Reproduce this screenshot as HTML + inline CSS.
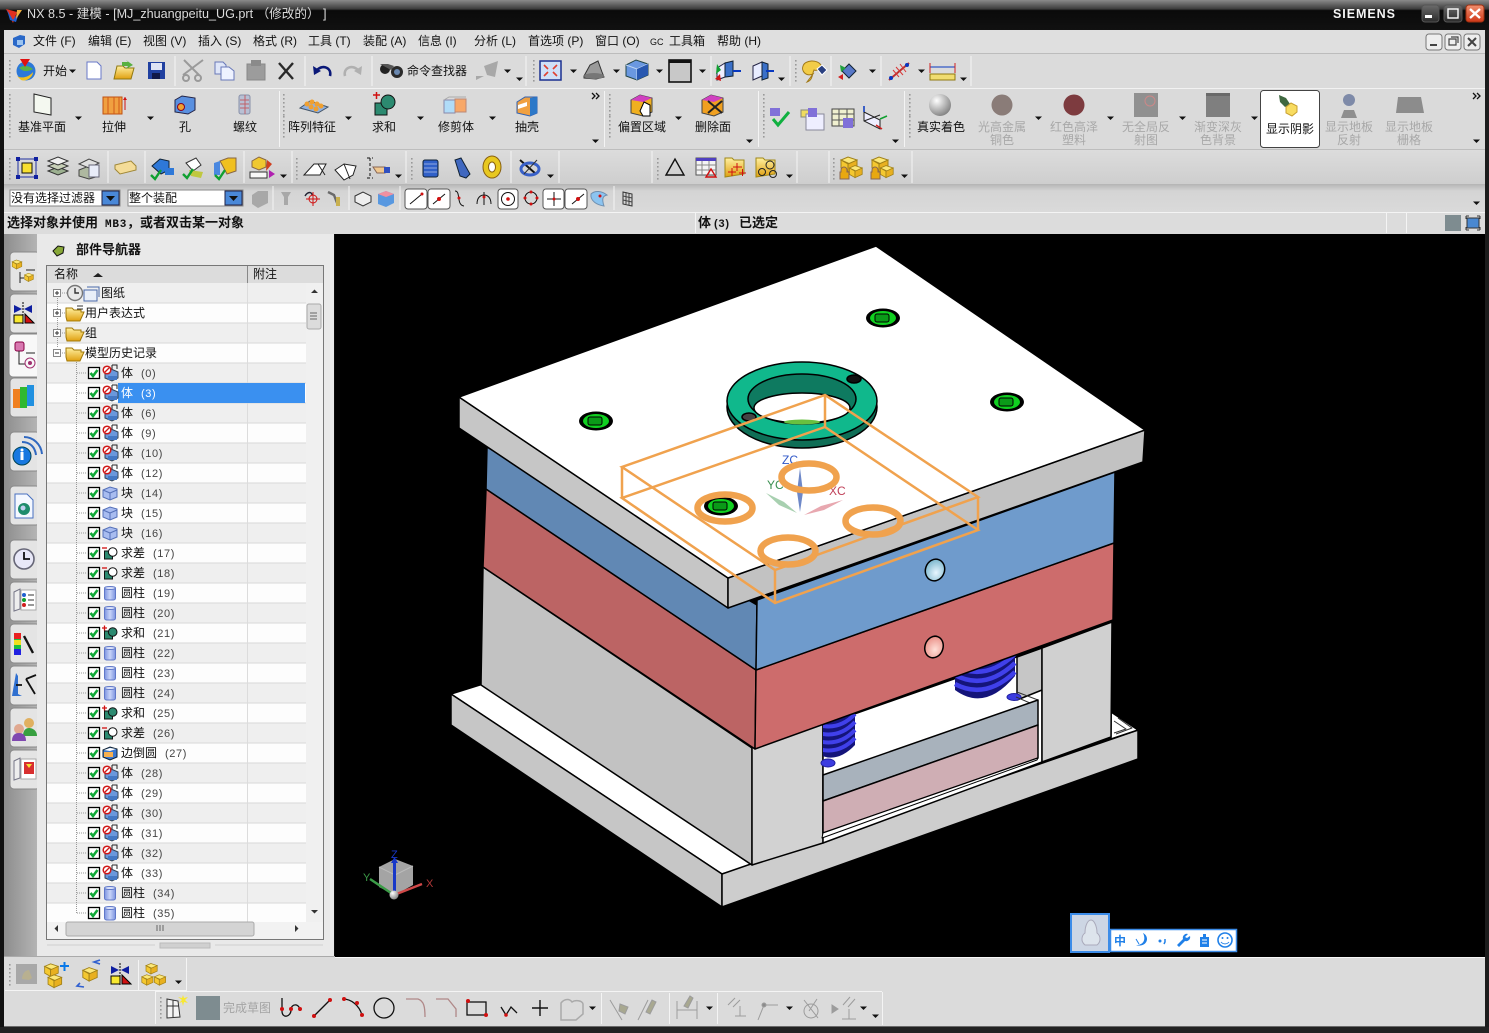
<!DOCTYPE html>
<html><head><meta charset="utf-8"><title>NX 8.5</title>
<style>
html,body{margin:0;padding:0;background:#000;width:1489px;height:1033px;overflow:hidden}
svg{display:block}
text{font-family:"Liberation Sans","WenQuanYi Zen Hei","Noto Sans CJK SC",sans-serif;font-size:12px;fill:#111}
.m text{text-anchor:middle}
.g text{fill:#a8a8a8}
.n{font-size:11px;fill:#444;letter-spacing:.6px}
.b{font-weight:700;font-size:13px}
</style></head><body>
<svg xmlns="http://www.w3.org/2000/svg" width="1489" height="1033" viewBox="0 0 1489 1033">
<defs>
<linearGradient id="tb" x1="0" y1="0" x2="0" y2="1"><stop offset="0" stop-color="#8a8a8a"/><stop offset=".3" stop-color="#3c3c3c"/><stop offset=".35" stop-color="#0a0a0a"/><stop offset="1" stop-color="#111"/></linearGradient>
<linearGradient id="side" x1="0" y1="0" x2="1" y2="0"><stop offset="0" stop-color="#8d8d8d"/><stop offset="1" stop-color="#b4b4b4"/></linearGradient>
<linearGradient id="bar3" x1="0" y1="0" x2="0" y2="1"><stop offset="0" stop-color="#dcdcdc"/><stop offset="1" stop-color="#cecece"/></linearGradient>
<linearGradient id="bar4" x1="0" y1="0" x2="0" y2="1"><stop offset="0" stop-color="#b4b4b4"/><stop offset=".25" stop-color="#d4d4d4"/><stop offset="1" stop-color="#dadada"/></linearGradient>
<linearGradient id="btn" x1="0" y1="0" x2="0" y2="1"><stop offset="0" stop-color="#6c6c6c"/><stop offset="1" stop-color="#2a2a2a"/></linearGradient>
<linearGradient id="red" x1="0" y1="0" x2="0" y2="1"><stop offset="0" stop-color="#f09070"/><stop offset="1" stop-color="#d03818"/></linearGradient>
<linearGradient id="folder" x1="0" y1="0" x2="0" y2="1"><stop offset="0" stop-color="#fff0a0"/><stop offset="1" stop-color="#e0a010"/></linearGradient>
<linearGradient id="cyl" x1="0" y1="0" x2="1" y2="0"><stop offset="0" stop-color="#7c94e0"/><stop offset=".5" stop-color="#c8d4f8"/><stop offset="1" stop-color="#7c94e0"/></linearGradient>
<radialGradient id="ball" cx=".35" cy=".3" r=".8"><stop offset="0" stop-color="#fff"/><stop offset="1" stop-color="#777"/></radialGradient>
<radialGradient id="hb" cx=".6" cy=".6" r=".7"><stop offset="0" stop-color="#e8f6ff"/><stop offset="1" stop-color="#70b0c8"/></radialGradient>
<radialGradient id="hr" cx=".6" cy=".6" r=".7"><stop offset="0" stop-color="#ffe0d8"/><stop offset="1" stop-color="#e88880"/></radialGradient>
<path id="tk" d="M-3.500-1.500h7L0 2z" fill="#111"/>
<g id="grip" fill="#999"><rect y="0" width="1.600" height="1.600"/><rect y="4" width="1.600" height="1.600"/><rect y="8" width="1.600" height="1.600"/><rect y="12" width="1.600" height="1.600"/><rect y="16" width="1.600" height="1.600"/><rect y="20" width="1.600" height="1.600"/></g>
<g id="chk"><rect x="88.500" y="-5.500" width="11" height="11" fill="#fff" stroke="#000" stroke-width="1.300"/><path d="M90.500 0l2.500 3 4.500-6" fill="none" stroke="#10a838" stroke-width="2.600"/></g>
<g id="ibody"><path d="M105 0l6-4 7 3v6l-6 3-7-3z" fill="#6a98dc" stroke="#345"/><path d="M108 3h9v4h-9z" fill="#4478c4"/><path d="M112-8h5v4M112-8v4" fill="none" stroke="#222"/><circle cx="107" cy="-3" r="3.800" fill="#fff" stroke="#d01818" stroke-width="1.500"/><path d="M105-1l4-4" stroke="#d01818" stroke-width="1.300"/></g>
<g id="iblock"><path d="M103-3l7-3 7 2v8l-7 3-7-3z" fill="#a8bcf0" stroke="#5570b8"/><path d="M103-3l7 3v7M110 0l7-3" fill="none" stroke="#5570b8"/></g>
<g id="icyl"><rect x="104.500" y="-6" width="11" height="13" rx="2" fill="url(#cyl)" stroke="#6078c8"/><ellipse cx="110" cy="-5" rx="5.500" ry="1.500" fill="#d8e0fa" stroke="#6078c8"/></g>
<g id="idiff"><rect x="104.500" y="-2" width="8" height="8" fill="#2c8a70" stroke="#111"/><circle cx="112.700" cy="-1" r="4.300" fill="#fff" stroke="#111"/><path d="M102-5h5" stroke="#d01010" stroke-width="1.300"/></g>
<g id="iunion"><rect x="104.500" y="-2" width="8" height="8" fill="#2c8a70" stroke="#111"/><circle cx="112.700" cy="-1" r="4.300" fill="#2c8a70" stroke="#111"/><path d="M102-5h5M104.500-7.500v5" stroke="#d01010" stroke-width="1.300"/></g>
<g id="iblend"><path d="M103-3l7-3 7 2v8l-7 3-7-3z" fill="#3c78d0" stroke="#123"/><path d="M104-1h9v5h-9z" fill="#f8b050"/><path d="M104-3l6-2 6 1-6 2z" fill="#fff"/></g>
<path id="bf" d="M0 3V-6h6l2 2h7v2h3l-4 9H1z" fill="url(#folder)" stroke="#a07808"/>
<g id="cb"><path d="M-8-2l7-3 9 3-7 4z" fill="#fce878" stroke="#a08018"/><path d="M-8-2v8l7 4V2z" fill="#f4c830" stroke="#a08018"/><path d="M-1 2v8l9-4V-2z" fill="#e8b020" stroke="#a08018"/></g>
<g id="mirr"><path d="M-9-8L-1-4-9 0zM1-4L9-8V0z" fill="#0e1ea0"/><path d="M0-11V11" stroke="#000" stroke-dasharray="2 1"/><rect x="-9" y="2" width="9" height="8" fill="#f8e830" stroke="#000"/><path d="M2 10V1l9 9z" fill="#d01010" stroke="#000"/></g>
<clipPath id="cav"><polygon points="823,720 1042,640 1042,762 823,843"/></clipPath>
</defs>

<rect width="1489" height="1033" fill="#0d0d0d"/>
<rect width="1489" height="30" fill="url(#tb)"/>
<path d="M6 9l11 3-4 11z" fill="#e03020"/><path d="M7 10l6 10 7-10-4 12-6-2z" fill="#2060d0"/><path d="M17 10l5 0-6 9z" fill="#f0b040"/>
<text x="27" y="18" style="fill:#dcdcdc;font-size:12.600px">NX 8.5 - 建模 - [MJ_zhuangpeitu_UG.prt （修改的） ]</text>
<text x="1333" y="18" textLength="62" lengthAdjust="spacing" style="fill:#f4f4f4;font-weight:700;font-size:12.500px">SIEMENS</text>
<rect x="1422" y="5" width="17" height="17" rx="3" fill="url(#btn)" stroke="#555"/><rect x="1425" y="15" width="7" height="3" fill="#fff"/>
<rect x="1444" y="5" width="18" height="17" rx="3" fill="url(#btn)" stroke="#555"/><rect x="1448" y="9" width="10" height="9" fill="none" stroke="#fff" stroke-width="1.400"/>
<rect x="1466" y="5" width="18" height="17" rx="3" fill="url(#red)" stroke="#a03010"/><path d="M1470 9l10 9m0-9l-10 9" stroke="#fff" stroke-width="2.400"/>

<rect x="4" y="30" width="1481" height="204" fill="#dadada"/>
<rect x="4" y="30" width="1481" height="24" fill="#dfdfdf"/>
<rect x="4" y="53" width="1481" height="1" fill="#bcbcbc"/>
<rect x="4" y="54" width="1481" height="34" fill="#dbdbdb"/>
<rect x="4" y="88" width="1481" height="1" fill="#f2f2f2"/>
<rect x="4" y="89" width="1481" height="60" fill="#dadada"/>
<rect x="4" y="149" width="1481" height="1" fill="#bdbdbd"/>
<rect x="4" y="150" width="1481" height="34" fill="url(#bar3)"/>
<rect x="4" y="184" width="1481" height="28" fill="url(#bar4)"/>
<rect x="4" y="212" width="1481" height="1" fill="#f4f4f4"/>
<rect x="4" y="213" width="1481" height="21" fill="#dcdcdc"/>
<path d="M695.500 213v20M1386.500 213v20M1406.500 213v20" stroke="#f4f4f4"/>

<path d="M13 38l7-3 5 1v8l-6 4-6-3z" fill="#2a68c8"/><path d="M17 40h6v5h-6z" fill="#9cc4f0"/>
<text y="45"><tspan x="33">文件 (F)</tspan><tspan x="88">编辑 (E)</tspan><tspan x="143">视图 (V)</tspan><tspan x="198">插入 (S)</tspan><tspan x="253">格式 (R)</tspan><tspan x="308">工具 (T)</tspan><tspan x="363">装配 (A)</tspan><tspan x="418">信息 (I)</tspan><tspan x="474">分析 (L)</tspan><tspan x="528">首选项 (P)</tspan><tspan x="595">窗口 (O)</tspan><tspan x="650" style="font-size:9px">GC</tspan><tspan x="669">工具箱</tspan><tspan x="717">帮助 (H)</tspan></text>
<g fill="#eee" stroke="#777"><rect x="1426" y="34" width="16" height="16" rx="3"/><rect x="1445" y="34" width="16" height="16" rx="3"/><rect x="1464" y="34" width="16" height="16" rx="3"/></g>
<path d="M1430 45h7" stroke="#444" stroke-width="2"/><path d="M1449 39h7v6h-7zM1451 37h7v6" fill="none" stroke="#444" stroke-width="1.200"/><path d="M1468 38l8 8m0-8l-8 8" stroke="#444" stroke-width="2"/>

<g stroke="#f4f4f4"><path d="M175 56v30M305 56v30M372 56v30M526 56v30M711 56v30M790 56v30M831 56v30M881 56v30M971 56v30"/></g>
<use href="#grip" x="9" y="60"/><use href="#grip" x="533" y="60"/><use href="#grip" x="795" y="60"/>
<circle cx="26" cy="71" r="9.500" fill="#2c78d8"/><path d="M19 68c4-3 9-3 14 1-3 2-8 3-11 1z" fill="#58b048"/><path d="M17 76c5 3 12 1 16-4 0 5-6 10-12 8z" fill="#f0c020"/><path d="M20 59h10l-5 8z" fill="#e01010"/>
<text x="43" y="75">开始</text><use href="#tk" x="72.500" y="71"/>
<path d="M87 62h10l4 4v13H87z" fill="#fff" stroke="#6878c8"/>
<path d="M114 79l3-13h6l2 2h9l-3 11z" fill="url(#folder)" stroke="#907810"/><path d="M122 62h6l-2-2 7 5-7 4 2-3h-6z" fill="#58b040"/>
<rect x="148" y="62" width="17" height="17" fill="#2040a0"/><rect x="151" y="63" width="11" height="7" fill="#dfe4f4"/><rect x="152" y="73" width="8" height="6" fill="#101848"/>
<g stroke="#9a9a9a" fill="none" stroke-width="2"><path d="M184 60l15 15M203 60l-20 15"/><circle cx="186" cy="78" r="3"/><circle cx="198" cy="78" r="3"/></g>
<path d="M215 62h8l3 3v9h-11z" fill="#dfe6f8" stroke="#6878b8"/><path d="M221 67h8l5 4v9h-13z" fill="#eef2ff" stroke="#6878b8"/>
<rect x="247" y="64" width="18" height="16" fill="#9c9c9c" stroke="#888"/><rect x="251" y="60" width="10" height="6" fill="#8a8a8a"/>
<path d="M279 63l14 16m0-16l-14 16" stroke="#2a2a2a" stroke-width="2.400"/>
<path d="M330 76c2-8-7-12-13-6" fill="none" stroke="#0a1878" stroke-width="2.600"/><path d="M313 66l1 9 7-4z" fill="#0a1878"/>
<path d="M345 76c-2-8 7-12 13-6" fill="none" stroke="#b0b0b0" stroke-width="2.600"/><path d="M362 66l-1 9-7-4z" fill="#b0b0b0"/>
<g transform="translate(391 71)"><circle cx="-6" cy="-2" r="5" fill="#222"/><circle cx="6" cy="1" r="6" fill="#2a2a2a"/><circle cx="6" cy="1" r="3" fill="#6a88b0"/><path d="M-11-7h8l6 2-3 4z" fill="#555"/></g>
<text x="407" y="75">命令查找器</text>
<path d="M476 76h8l-8 4zM484 66l14-5-3 16-8-2z" fill="#a8a8a8"/><use href="#tk" x="507.500" y="71"/><use href="#tk" x="519.500" y="79"/>
<rect x="540" y="61" width="21" height="19" fill="#cfe0f8" stroke="#1a3090" stroke-width="1.500"/><path d="M544 65l4 4m9-4l-4 4m-9 7l4-4m9 4l-4-4" stroke="#e04030" stroke-width="1.600"/>
<use href="#tk" x="573.500" y="71"/>
<path d="M584 76l6-11 8-4 4 11 2 5-8 2-12-1z" fill="#9a9a9a" stroke="#333"/><ellipse cx="594" cy="76" rx="10" ry="3" fill="#777"/><use href="#tk" x="616.500" y="71"/>
<path d="M626 65l10-5 12 4v11l-11 5-11-4z" fill="#6a98e0" stroke="#244"/><path d="M626 65l11 4v11M637 69l11-5" fill="none" stroke="#c0d8f4"/><path d="M637 69l11-5v11l-11 5z" fill="#2858b0"/><use href="#tk" x="659.500" y="71"/>
<rect x="669" y="60" width="22" height="22" fill="#c8c8c8" stroke="#111" stroke-width="1.600"/><rect x="669" y="60" width="22" height="3" fill="#111"/><use href="#tk" x="702.500" y="71"/>
<path d="M717 68l8-5v14l-8 3z" fill="#eef" stroke="#224"/><path d="M725 63l8-2v15l-8 1z" fill="#3a70c8" stroke="#123"/><path d="M733 71h8" stroke="#0838c0" stroke-width="2"/><path d="M717 64l-1 10 5-4z" fill="#10a030"/><path d="M720 74l1 7-6-2z" fill="#d01818"/>
<path d="M753 66l9-4v14l-9 4z" fill="#e8ecff" stroke="#224"/><path d="M762 62l6 2v14l-6 2z" fill="#3a70c8" stroke="#123"/><path d="M766 71h8" stroke="#0838c0" stroke-width="2"/><use href="#tk" x="781.500" y="79"/>
<path d="M803 66c2-6 14-7 18-1 2 4-5 6-7 5-2 4-1 10-7 12l6-8c-7 3-12-3-10-8z" fill="#f2cc48" stroke="#a07818"/><path d="M817 69l5-4 5 5-5 5z" fill="#2a4080" stroke="#fff"/>
<path d="M849 64l7 7-7 7-7-7z" fill="#5878c8" stroke="#123"/><path d="M840 65l1 7 5-4z" fill="#20a040"/><path d="M843 74v6l-5-3z" fill="#d02020"/><use href="#tk" x="872.500" y="71"/>
<path d="M889 80l20-17" stroke="#c03030" stroke-width="2"/><path d="M893 70l6 7m-3-10l7 8m-3-11l6 8" stroke="#d83838"/><circle cx="891" cy="78" r="2" fill="#0838c0"/><circle cx="907" cy="65" r="2" fill="#0838c0"/><use href="#tk" x="921.500" y="71"/>
<path d="M930 67h25" stroke="#0838c0"/><path d="M930 63v10M955 63v10" stroke="#d02020"/><rect x="930" y="74" width="25" height="6" fill="#f0dc70" stroke="#907810"/><use href="#tk" x="963.500" y="79"/>

<g stroke="#f4f4f4"><path d="M279.500 91v56M604.500 91v56M758.500 91v56M904.500 91v56"/></g>
<use href="#grip" x="9" y="94"/><use href="#grip" x="9" y="116"/><use href="#grip" x="283" y="94"/><use href="#grip" x="283" y="116"/><use href="#grip" x="609" y="94"/><use href="#grip" x="609" y="116"/><use href="#grip" x="763" y="94"/><use href="#grip" x="763" y="116"/><use href="#grip" x="909" y="94"/><use href="#grip" x="909" y="116"/>
<g class="m"><text x="42" y="131">基准平面</text><text x="114" y="131">拉伸</text><text x="185" y="131">孔</text><text x="245" y="131">螺纹</text><text x="312" y="131">阵列特征</text><text x="384" y="131">求和</text><text x="456" y="131">修剪体</text><text x="527" y="131">抽壳</text><text x="642" y="131">偏置区域</text><text x="713" y="131">删除面</text><text x="941" y="131">真实着色</text></g>
<use href="#tk" x="78.500" y="118"/><use href="#tk" x="150.500" y="118"/><use href="#tk" x="348.500" y="118"/><use href="#tk" x="420.500" y="118"/><use href="#tk" x="492.500" y="118"/><use href="#tk" x="595.500" y="141"/><use href="#tk" x="678.500" y="118"/><use href="#tk" x="749.500" y="141"/><use href="#tk" x="895.500" y="141"/><use href="#tk" x="1038.500" y="118"/><use href="#tk" x="1110.500" y="118"/><use href="#tk" x="1182.500" y="118"/><use href="#tk" x="1254.500" y="118"/><use href="#tk" x="1476.500" y="141"/>
<path d="M592 93l3 3-3 3M596 93l3 3-3 3M1473 93l3 3-3 3M1477 93l3 3-3 3" fill="none" stroke="#111" stroke-width="1.300"/>
<path d="M34 94l17 4v17l-17-3z" fill="#f4f8f0" stroke="#222"/>
<path d="M103 97h19v17h-19z" fill="#f0a040" stroke="#c05010"/><path d="M108 97v17M114 97v17M119 97v17" stroke="#d05818"/><path d="M125 97v13" stroke="#d01010"/><path d="M123 100l2-3 2 3z" fill="#d01010"/>
<path d="M175 100l7-4 13 2v12l-7 4-13-2z" fill="#5a90e0" stroke="#224"/><circle cx="181" cy="107" r="3.500" fill="#f0a030" stroke="#802"/>
<rect x="239" y="95" width="11" height="19" rx="2" fill="#b8c0d4" stroke="#8890a8"/><path d="M240 100h9M240 104h9M240 108h9M245 95v19" stroke="#c06068"/>
<path d="M300 108l10-7 18 6-10 6z" fill="#90b0e0" stroke="#456"/><g fill="#f0a030"><circle cx="307" cy="104" r="2.500"/><circle cx="312" cy="102" r="2.500"/><circle cx="317" cy="104" r="2.500"/><circle cx="311" cy="107" r="2.500"/><circle cx="316" cy="109" r="2.500"/><circle cx="321" cy="106" r="2.500"/></g>
<rect x="375" y="103" width="12" height="12" fill="#2c8a70" stroke="#111"/><circle cx="388" cy="102" r="7" fill="#2c8a70" stroke="#111"/><path d="M373 95h7M376.500 92v7" stroke="#d01010" stroke-width="1.500"/>
<path d="M444 100h11v13h-11z" fill="#b0dcf8" stroke="#88a"/><path d="M455 99h11v13h-11z" fill="#f8a868" stroke="#b87"/><path d="M444 100l5-3h17" fill="none" stroke="#aaa"/>
<path d="M517 102l8-5h12v16l-7 3-13-3z" fill="#f0a040" stroke="#3060b0"/><path d="M530 98l7-1v16l-7 3z" fill="#2c78c8"/><path d="M518 105l9-3v4l-9 3z" fill="#fff"/>
<path d="M631 100l9-5 12 3v14l-9 4-12-3z" fill="#f0b020" stroke="#444"/><path d="M640 95l12 3-9 4-12-2z" fill="#d040c0"/><path d="M644 102l6 3v11h-7l-3-5z" fill="#fff" stroke="#000"/>
<path d="M702 100l9-5 12 3v14l-9 4-12-3z" fill="#f0a020" stroke="#444"/><path d="M711 95l12 3-9 4-12-2z" fill="#d040c0"/><path d="M708 113l14-12M708 101l14 12" stroke="#222" stroke-width="2"/>
<rect x="770" y="108" width="10" height="8" fill="#8070d8"/><path d="M773 119l5 6 11-13" fill="none" stroke="#10b040" stroke-width="3"/>
<rect x="801" y="110" width="8" height="7" fill="#f0dc60" stroke="#887"/><rect x="806" y="114" width="18" height="16" fill="#eef" stroke="#889"/><rect x="808" y="108" width="9" height="9" fill="#8070d8"/>
<rect x="832" y="109" width="22" height="17" fill="#f0f0d0" stroke="#444"/><path d="M832 114h22M832 120h22M839 109v17M847 109v17" stroke="#555"/><rect x="843" y="118" width="10" height="10" fill="#8070d8"/>
<path d="M864 112l16 8v9l-16-8z" fill="#eef" stroke="#222"/><path d="M864 121l16-6" stroke="#222"/><path d="M864 112v-6" stroke="#0838c0" stroke-width="1.500"/><path d="M880 119l7-3" stroke="#10a030" stroke-width="1.500"/><path d="M876 125l6 4" stroke="#d02020" stroke-width="1.500"/>
<circle cx="940" cy="105" r="11" fill="url(#ball)"/>
<g class="m g"><text x="1002" y="131">光高金属</text><text x="1002" y="144">铜色</text><text x="1074" y="131">红色高泽</text><text x="1074" y="144">塑料</text><text x="1146" y="131">无全局反</text><text x="1146" y="144">射图</text><text x="1218" y="131">渐变深灰</text><text x="1218" y="144">色背景</text><text x="1349" y="131">显示地板</text><text x="1349" y="144">反射</text><text x="1409" y="131">显示地板</text><text x="1409" y="144">栅格</text></g>
<circle cx="1002" cy="105" r="10.500" fill="#8a7c78"/><circle cx="1074" cy="105" r="10.500" fill="#7d3b3f"/><rect x="1134" y="93" width="24" height="24" fill="#909090"/><circle cx="1150" cy="101" r="5" fill="none" stroke="#c88"/><rect x="1206" y="93" width="24" height="24" fill="#7f7f7f"/><rect x="1206" y="93" width="24" height="3" fill="#6a6a6a"/>
<rect x="1260.500" y="90.500" width="59" height="57" rx="3" fill="#fff" stroke="#444"/>
<path d="M1279 95l7 3 4 6-5 3-5-5z" fill="#3f6840"/><path d="M1286 107l5-4 6 3v6l-5 4-6-3z" fill="#f8dc60" stroke="#c8a030"/>
<text x="1290" y="133" style="text-anchor:middle">显示阴影</text>
<circle cx="1349" cy="100" r="6" fill="#7e8aa8"/><path d="M1341 118l3-8h10l3 8 3 0H1337z" fill="#8e8e8e"/><path d="M1398 97h23l3 16h-28z" fill="#8c8c8c"/>

<g stroke="#f4f4f4"><path d="M108 151v32M145 151v32M244 151v32M292 151v32M406 151v32M511 151v32M559 151v32M652 151v32M797 151v32M829 151v32M912 151v32"/></g>
<use href="#grip" x="9" y="158"/><use href="#grip" x="296" y="158"/><use href="#grip" x="411" y="158"/><use href="#grip" x="657" y="158"/><use href="#grip" x="833" y="158"/>
<rect x="18" y="159" width="18" height="18" fill="none" stroke="#2030a0"/><rect x="22" y="163" width="10" height="10" fill="#f8e030" stroke="#111"/><g fill="#1020a0"><rect x="16" y="157" width="4" height="4"/><rect x="34" y="157" width="4" height="4"/><rect x="16" y="175" width="4" height="4"/><rect x="34" y="175" width="4" height="4"/></g>
<g fill="#9cb090" stroke="#333"><path d="M48 171l10-4 10 4-10 4z"/><path d="M48 166l10-4 10 4-10 4z" fill="#c8d0b8"/><path d="M48 161l10-4 10 4-10 4z" fill="#f0f0f0"/></g>
<g stroke="#444"><path d="M79 170l10-4 10 4v6l-10 3-10-3z" fill="#aeb8a0"/><path d="M79 164l10-5 10 4-10 5z" fill="#e0e0e0"/></g><rect x="89" y="165" width="10" height="12" fill="#e8ecf8" stroke="#667"/>
<path d="M115 165l16-4 5 5v4l-16 4-5-5z" fill="#f4dc98" stroke="#a08838"/>
<path d="M152 166l8-7 9 2v9l-8 4z" fill="#2e78d8" stroke="#123"/><path d="M165 168h9v7h-9z" fill="#2e78d8"/><path d="M151 175l4 4 6-9" fill="none" stroke="#10a030" stroke-width="2.400"/>
<path d="M186 163l10-5 5 7-8 6z" fill="#fff" stroke="#333"/><path d="M189 170l14 2-2 6-10-2z" fill="#c0c840"/><path d="M183 174l4 4 6-9" fill="none" stroke="#10a030" stroke-width="2.400"/>
<path d="M220 161l8-3h8v13l-9 3z" fill="#f0c020" stroke="#864"/><path d="M214 163l6-2v14h-6z" fill="#4a88e0"/><path d="M215 175l4 4 6-9" fill="none" stroke="#10a030" stroke-width="2.400"/>
<path d="M252 161l7-4 7 3v7l-7 3-7-3z" fill="#f0c830" stroke="#864"/><path d="M250 172h17v6h-17z" fill="#f8f8f8" stroke="#333"/><path d="M267 160l5 4-6 7z" fill="#d04020"/><path d="M269 170l6 4-6 4z" fill="#b020b0"/><use href="#tk" x="283.500" y="176"/>
<path d="M304 175l10-11h12l-6 11zM318 164l7 11" fill="#fff" stroke="#222"/>
<path d="M335 170l9-6 12 2-3 9-9 5z" fill="#fff" stroke="#222"/><path d="M344 164l6 15" stroke="#222"/>
<path d="M367 158h6M367 178h6M370 158v20" stroke="#111" stroke-dasharray="3 2"/><path d="M373 167h12v6h-8z" fill="#f0c890" stroke="#865"/><rect x="384" y="167" width="6" height="6" fill="#3050c0"/><use href="#tk" x="398.500" y="176"/>
<rect x="423" y="160" width="15" height="17" rx="2" fill="#3060c8" stroke="#123"/><path d="M424 164h13M424 168h13M424 172h13" stroke="#90a8e0"/>
<path d="M455 160l6-2 9 16-4 4-6-2z" fill="#4068c0" stroke="#123"/>
<ellipse cx="492" cy="167" rx="9" ry="11" fill="#e8c820" stroke="#886010"/><ellipse cx="492" cy="167" rx="3.500" ry="5" fill="#fff" stroke="#886010"/>
<path d="M520 160l16 14" stroke="#111" stroke-width="2"/><ellipse cx="530" cy="169" rx="9" ry="6" fill="none" stroke="#3860c8" stroke-width="3"/><path d="M537 160l-13 14" stroke="#333"/><use href="#tk" x="550.500" y="176"/>
<path d="M666 175l9-16 9 16z" fill="none" stroke="#111" stroke-width="1.400"/>
<rect x="696" y="158" width="20" height="17" fill="#f4f4f4" stroke="#555"/><rect x="696" y="158" width="20" height="3" fill="#5040c0"/><path d="M696 165h20M696 170h20M702 161v14M709 161v14" stroke="#888"/><path d="M706 177l5-8 5 8z" fill="none" stroke="#d01010" stroke-width="1.400"/>
<path d="M725 158h7l2 2h10v14l-19 3z" fill="url(#folder)" stroke="#a08818"/><path d="M733 167h9M737 163v8M728 172h8M732 168v8M739 173h7M742.500 169v7" stroke="#d01010"/>
<path d="M756 158h7l2 2h10v14l-19 3z" fill="url(#folder)" stroke="#a08818"/><circle cx="770" cy="165" r="4" fill="none" stroke="#222"/><circle cx="762" cy="172" r="3.500" fill="none" stroke="#222"/><circle cx="773" cy="174" r="3.500" fill="none" stroke="#222"/><use href="#tk" x="789.500" y="176"/>
<g transform="translate(851 168)"><use href="#cb" x="-2" y="-6"/><use href="#cb" x="6" y="2" transform="scale(.8)"/><path d="M-10 2a3 3 0 0 1 6 0v2h2v7h-9V4h1z" fill="#e8a810" stroke="#865"/></g>
<g transform="translate(882 168)"><use href="#cb" x="-2" y="-6"/><use href="#cb" x="6" y="2" transform="scale(.8)"/><path d="M-10 2a3 3 0 0 1 6 0v2h2v7h-9V4h1z" fill="#e8a810" stroke="#865"/></g><use href="#tk" x="904.500" y="176"/>

<rect x="10" y="190" width="110" height="16" fill="#fff" stroke="#888"/><rect x="102" y="191" width="17" height="14" fill="#4a88d8" stroke="#224"/><path d="M106 196h9l-4.500 5z" fill="#111"/>
<rect x="128" y="190" width="115" height="16" fill="#fff" stroke="#888"/><rect x="225" y="191" width="17" height="14" fill="#4a88d8" stroke="#224"/><path d="M229 196h9l-4.500 5z" fill="#111"/>
<text x="11" y="202">没有选择过滤器</text><text x="129" y="202">整个装配</text>
<g stroke="#f4f4f4"><path d="M273 186v24M349 186v24M400 186v24M614 186v24"/></g>
<path d="M252 195l6-4h10v12l-10 5-6-4z" fill="#a8a8a8"/>
<path d="M281 192h10l-3 5v8h-4v-8z" fill="#a8a8a8"/><path d="M305 196c3-5 7-4 7-1" fill="none" stroke="#223" stroke-width="1.400"/><circle cx="313" cy="199" r="4" fill="none" stroke="#d01010"/><path d="M306 199h14M313 192v14" stroke="#d01010"/>
<path d="M328 192l6 3 3 8" stroke="#6a6a6a" stroke-width="2.400" fill="none"/><rect x="336" y="197" width="4" height="9" fill="#c8b050"/>
<path d="M355 196l8-4 8 4v6l-8 4-8-4z" fill="#eee" stroke="#333"/><path d="M378 194l8-3 8 3v9l-8 4-8-3z" fill="#5898e0"/><path d="M378 194l8 3 8-3-8-3z" fill="#f090a0"/>
<g fill="#fff" stroke="#555"><rect x="405" y="189" width="22" height="20" rx="3"/><rect x="428" y="189" width="22" height="20" rx="3"/><rect x="498" y="189" width="20" height="20" rx="3"/><rect x="543" y="189" width="21" height="20" rx="3"/><rect x="565" y="189" width="22" height="20" rx="3"/></g>
<path d="M410 204l12-10M433 204l12-10M572 204l12-10" stroke="#111"/><circle cx="422" cy="194" r="1.500" fill="#d01010"/><circle cx="439" cy="199" r="2" fill="#d01010"/><circle cx="578" cy="199" r="2" fill="#d01010"/>
<path d="M455 191c6 0 1 14 9 15" fill="none" stroke="#111"/><circle cx="459" cy="198" r="1.500" fill="#d01010"/>
<path d="M477 204c0-7 4-9 7-9s7 2 7 9M484 192v13" fill="none" stroke="#111"/><circle cx="484" cy="197" r="1.500" fill="#d01010"/>
<circle cx="508" cy="199" r="6.500" fill="none" stroke="#111"/><circle cx="508" cy="199" r="1.800" fill="#d01010"/>
<circle cx="531" cy="198" r="6" fill="none" stroke="#111"/><g fill="#d01010"><circle cx="531" cy="192" r="1.500"/><circle cx="537" cy="198" r="1.500"/><circle cx="525" cy="198" r="1.500"/><circle cx="531" cy="204" r="1.500"/></g>
<path d="M547 199h14M554 192v14" stroke="#111"/><circle cx="554" cy="199" r="1.500" fill="#d01010"/>
<path d="M591 194c4-4 11-3 16 1-5 1-5 5-3 11-7-1-14-5-13-12z" fill="#8cc4f0" stroke="#7090b0"/><circle cx="600" cy="196" r="1.500" fill="#d01010"/>
<path d="M623 192l9 2v12l-9-2z" fill="none" stroke="#333"/><path d="M623 196l9 2M623 200l9 2M626 192v12M629 193v12" stroke="#444"/>
<use href="#tk" x="1476.500" y="203"/>

<text y="227" class="b"><tspan x="7">选择对象并使用</tspan><tspan x="105" style="font-family:'Liberation Mono',monospace;font-size:11px;letter-spacing:.8px">MB3</tspan><tspan x="127">，或者双击某一对象</tspan></text>
<text y="227" class="b"><tspan x="698">体</tspan><tspan x="714" style="font-size:11px;letter-spacing:.8px">(3)</tspan><tspan x="739">已选定</tspan></text>
<rect x="1445" y="215" width="16" height="16" fill="#7e8c90"/><rect x="1467" y="218" width="12" height="10" fill="#4a88d0" stroke="#333"/><path d="M1466 216h3M1466 216v3M1480 216h-3M1480 216v3M1466 230h3M1466 230v-3M1480 230h-3M1480 230v-3" fill="none" stroke="#333"/>

<rect x="4" y="234" width="33" height="723" fill="url(#side)"/>
<g fill="#e4e4e4" stroke="#888">
<rect x="10" y="252" width="30" height="39" rx="4"/><rect x="10" y="294" width="30" height="39" rx="4"/>
<rect x="10" y="378" width="30" height="39" rx="4"/><rect x="10" y="432" width="30" height="39" rx="4"/>
<rect x="10" y="486" width="30" height="39" rx="4"/><rect x="10" y="540" width="30" height="39" rx="4"/><rect x="10" y="582" width="30" height="39" rx="4"/>
<rect x="10" y="624" width="30" height="39" rx="4"/><rect x="10" y="666" width="30" height="39" rx="4"/><rect x="10" y="708" width="30" height="39" rx="4"/><rect x="10" y="750" width="30" height="39" rx="4"/>
<rect x="9" y="334" width="32" height="43" rx="4" fill="#f8f8f8"/></g>

<rect x="37" y="234" width="297" height="723" fill="#e9e9e9"/>
<path d="M53 251l5-5 6 1-1 6-6 3z" fill="#88a838" stroke="#111"/>
<text x="76" y="254" class="b">部件导航器</text>
<rect x="46.500" y="265.500" width="277" height="674" fill="#f4f4f4" stroke="#777"/>
<rect x="47" y="266" width="276" height="17" fill="#dcdcdc"/>
<text x="54" y="278">名称</text><path d="M93 277l5-4 5 4z" fill="#222"/><text x="253" y="278">附注</text>
<path d="M247.500 266v17" stroke="#888"/>
<g fill="#efefef"><rect x="47" y="283" width="259" height="20"/><rect x="47" y="323" width="259" height="20"/><rect x="47" y="363" width="259" height="20"/><rect x="47" y="403" width="259" height="20"/><rect x="47" y="443" width="259" height="20"/><rect x="47" y="483" width="259" height="20"/><rect x="47" y="523" width="259" height="20"/><rect x="47" y="563" width="259" height="20"/><rect x="47" y="603" width="259" height="20"/><rect x="47" y="643" width="259" height="20"/><rect x="47" y="683" width="259" height="20"/><rect x="47" y="723" width="259" height="20"/><rect x="47" y="763" width="259" height="20"/><rect x="47" y="803" width="259" height="20"/><rect x="47" y="843" width="259" height="20"/><rect x="47" y="883" width="259" height="20"/></g>
<g fill="#fdfdfd"><rect x="47" y="303" width="259" height="20"/><rect x="47" y="343" width="259" height="20"/><rect x="47" y="383" width="259" height="20"/><rect x="47" y="423" width="259" height="20"/><rect x="47" y="463" width="259" height="20"/><rect x="47" y="503" width="259" height="20"/><rect x="47" y="543" width="259" height="20"/><rect x="47" y="583" width="259" height="20"/><rect x="47" y="623" width="259" height="20"/><rect x="47" y="663" width="259" height="20"/><rect x="47" y="703" width="259" height="20"/><rect x="47" y="743" width="259" height="20"/><rect x="47" y="783" width="259" height="20"/><rect x="47" y="823" width="259" height="20"/><rect x="47" y="863" width="259" height="20"/><rect x="47" y="903" width="259" height="19"/></g>
<path d="M47 303h259M47 323h259M47 343h259M47 363h259M47 383h259M47 403h259M47 423h259M47 443h259M47 463h259M47 483h259M47 503h259M47 523h259M47 543h259M47 563h259M47 583h259M47 603h259M47 623h259M47 643h259M47 663h259M47 683h259M47 703h259M47 723h259M47 743h259M47 763h259M47 783h259M47 803h259M47 823h259M47 843h259M47 863h259M47 883h259M47 903h259" stroke="#d8d8d8" fill="none"/>
<path d="M247.500 283v639" stroke="#dcdcdc"/>
<rect x="118" y="383" width="187" height="20" fill="#3a90f0"/>
<path d="M57.500 298v50M76.500 358v555" stroke="#999" stroke-dasharray="1 1" fill="none"/>
<path d="M62 293h6M62 313h6M62 333h6M62 353h6M77 373h10M77 393h10M77 413h10M77 433h10M77 453h10M77 473h10M77 493h10M77 513h10M77 533h10M77 553h10M77 573h10M77 593h10M77 613h10M77 633h10M77 653h10M77 673h10M77 693h10M77 713h10M77 733h10M77 753h10M77 773h10M77 793h10M77 813h10M77 833h10M77 853h10M77 873h10M77 893h10M77 913h10" stroke="#999" stroke-dasharray="1 1" fill="none"/>
<g fill="#fff" stroke="#888"><rect x="53.500" y="289.500" width="7" height="7"/><rect x="53.500" y="309.500" width="7" height="7"/><rect x="53.500" y="329.500" width="7" height="7"/><rect x="53.500" y="349.500" width="7" height="7"/></g>
<path d="M55 293h4M57 291v4M55 313h4M57 311v4M55 333h4M57 331v4M55 353h4" stroke="#333"/>
<circle cx="75" cy="293" r="7.500" fill="#e8e8e8" stroke="#777" stroke-width="1.400"/><path d="M75 288v5h4" fill="none" stroke="#333" stroke-width="1.400"/><path d="M84 290h13v11H84z" fill="#e8eef8" stroke="#4a68a8"/><path d="M87 287h12v10" fill="none" stroke="#4a68a8"/>
<use href="#bf" x="66" y="314"/><path d="M77 306h6M77 309h6" stroke="#333"/><use href="#bf" x="66" y="334"/><use href="#bf" x="66" y="354"/>
<text x="101" y="297">图纸</text><text x="85" y="317">用户表达式</text><text x="85" y="337">组</text><text x="85" y="357">模型历史记录</text>
<g>
<use href="#chk" y="373"/><use href="#ibody" y="373"/><use href="#chk" y="393"/><use href="#ibody" y="393"/><use href="#chk" y="413"/><use href="#ibody" y="413"/><use href="#chk" y="433"/><use href="#ibody" y="433"/><use href="#chk" y="453"/><use href="#ibody" y="453"/><use href="#chk" y="473"/><use href="#ibody" y="473"/>
<use href="#chk" y="493"/><use href="#iblock" y="493"/><use href="#chk" y="513"/><use href="#iblock" y="513"/><use href="#chk" y="533"/><use href="#iblock" y="533"/>
<use href="#chk" y="553"/><use href="#idiff" y="553"/><use href="#chk" y="573"/><use href="#idiff" y="573"/>
<use href="#chk" y="593"/><use href="#icyl" y="593"/><use href="#chk" y="613"/><use href="#icyl" y="613"/>
<use href="#chk" y="633"/><use href="#iunion" y="633"/>
<use href="#chk" y="653"/><use href="#icyl" y="653"/><use href="#chk" y="673"/><use href="#icyl" y="673"/><use href="#chk" y="693"/><use href="#icyl" y="693"/>
<use href="#chk" y="713"/><use href="#iunion" y="713"/><use href="#chk" y="733"/><use href="#idiff" y="733"/>
<use href="#chk" y="753"/><use href="#iblend" y="753"/>
<use href="#chk" y="773"/><use href="#ibody" y="773"/><use href="#chk" y="793"/><use href="#ibody" y="793"/><use href="#chk" y="813"/><use href="#ibody" y="813"/><use href="#chk" y="833"/><use href="#ibody" y="833"/><use href="#chk" y="853"/><use href="#ibody" y="853"/><use href="#chk" y="873"/><use href="#ibody" y="873"/>
<use href="#chk" y="893"/><use href="#icyl" y="893"/><use href="#chk" y="913"/><use href="#icyl" y="913"/>
</g>
<g>
<text x="121" y="377">体</text><text x="141" y="377" class="n">(0)</text>
<text x="121" y="397" style="fill:#fff">体</text><text x="141" y="397" class="n" style="fill:#fff">(3)</text>
<text x="121" y="417">体</text><text x="141" y="417" class="n">(6)</text>
<text x="121" y="437">体</text><text x="141" y="437" class="n">(9)</text>
<text x="121" y="457">体</text><text x="141" y="457" class="n">(10)</text>
<text x="121" y="477">体</text><text x="141" y="477" class="n">(12)</text>
<text x="121" y="497">块</text><text x="141" y="497" class="n">(14)</text>
<text x="121" y="517">块</text><text x="141" y="517" class="n">(15)</text>
<text x="121" y="537">块</text><text x="141" y="537" class="n">(16)</text>
<text x="121" y="557">求差</text><text x="153" y="557" class="n">(17)</text>
<text x="121" y="577">求差</text><text x="153" y="577" class="n">(18)</text>
<text x="121" y="597">圆柱</text><text x="153" y="597" class="n">(19)</text>
<text x="121" y="617">圆柱</text><text x="153" y="617" class="n">(20)</text>
<text x="121" y="637">求和</text><text x="153" y="637" class="n">(21)</text>
<text x="121" y="657">圆柱</text><text x="153" y="657" class="n">(22)</text>
<text x="121" y="677">圆柱</text><text x="153" y="677" class="n">(23)</text>
<text x="121" y="697">圆柱</text><text x="153" y="697" class="n">(24)</text>
<text x="121" y="717">求和</text><text x="153" y="717" class="n">(25)</text>
<text x="121" y="737">求差</text><text x="153" y="737" class="n">(26)</text>
<text x="121" y="757">边倒圆</text><text x="165" y="757" class="n">(27)</text>
<text x="121" y="777">体</text><text x="141" y="777" class="n">(28)</text>
<text x="121" y="797">体</text><text x="141" y="797" class="n">(29)</text>
<text x="121" y="817">体</text><text x="141" y="817" class="n">(30)</text>
<text x="121" y="837">体</text><text x="141" y="837" class="n">(31)</text>
<text x="121" y="857">体</text><text x="141" y="857" class="n">(32)</text>
<text x="121" y="877">体</text><text x="141" y="877" class="n">(33)</text>
<text x="121" y="897">圆柱</text><text x="153" y="897" class="n">(34)</text>
<text x="121" y="917">圆柱</text><text x="153" y="917" class="n">(35)</text>
</g>
<rect x="306" y="283" width="17" height="639" fill="#f0f0f0"/><path d="M311 293h7l-3.500-3.500zM311 910h7l-3.500 3.500z" fill="#333"/><rect x="307" y="304" width="14" height="25" rx="2" fill="#dcdcdc" stroke="#aaa"/><path d="M310 313h7M310 316h7M310 319h7" stroke="#666"/>
<rect x="47" y="922" width="276" height="17" fill="#f2f2f2"/><rect x="66" y="922" width="188" height="14" rx="2" fill="#d4d4d4" stroke="#aaa"/><path d="M157 925v6M160 925v6M163 925v6" stroke="#666"/><path d="M58 925v7l-3.500-3.500zM295 925v7l3.500-3.500z" fill="#333"/>
<path d="M47 945h108M215 945h108" stroke="#cfcfcf"/><rect x="160" y="943" width="50" height="5" fill="#d0d0d0" stroke="#bbb"/>

<rect x="335" y="234" width="1150" height="723" fill="#000"/>
<g stroke="#000" stroke-width="1.500" stroke-linejoin="round">
<polygon points="451,694 483,684 752,865 722,874" fill="#fff"/>
<polygon points="451,694 722,874 722,907 451,725" fill="#c6c6c6"/>
<polygon points="722,874 1138,730 1138,759 722,907" fill="#cdcdcd"/>
<polygon points="1111,712 1138,730 1111,739" fill="#fff"/>
<path d="M1114 721l12 8-12 4M1118 718l14 10-16 6" fill="none" stroke="#333" stroke-width="1"/>
<polygon points="483,567 752,748 752,865 481,685" fill="#c2c2c2"/>
<polygon points="752,745 823,722 823,843 752,865" fill="#d2d2d2"/>
<polygon points="823,725 1042,648 1042,762 823,843" fill="#fff"/>
<polygon points="1017,657 1042,648 1042,690 1017,700" fill="#c6c6c6"/>
<g clip-path="url(#cav)">
<path d="M955 650H1015V676Q985 712 955 690Z" fill="#14147a" stroke="none"/>
<g fill="none" stroke="#4040ea" stroke-width="4.500"><path d="M955 684Q985 700 1015 672"/><path d="M955 675Q985 691 1015 663"/><path d="M955 666Q985 682 1015 654"/><path d="M955 657Q985 673 1015 645"/></g>
<path d="M815 700H855V745Q835 766 815 752Z" fill="#14147a" stroke="none"/>
<g fill="none" stroke="#4040ea" stroke-width="4"><path d="M815 748Q838 756 855 738"/><path d="M815 740Q838 748 855 730"/><path d="M815 732Q838 740 855 722"/><path d="M815 724Q838 732 855 714"/></g>
</g>
<ellipse cx="828" cy="763" rx="7" ry="4" fill="#3c3ce0" stroke="#2020a0" stroke-width="1"/><ellipse cx="1014" cy="697" rx="7" ry="3.500" fill="#3c3ce0" stroke="#2020a0" stroke-width="1"/>
<path d="M1017 692l21 8-8 3-14-6" fill="none" stroke="#333" stroke-width="1"/>
<polygon points="823,775 1038,700 1038,725 823,801" fill="#a8b2bc"/>
<polygon points="823,801 1038,725 1038,758 823,833" fill="#cfaeb4"/>
<polygon points="823,833 1038,758 1037,760 822,838" fill="#fff" stroke-width="1"/>
<polygon points="1042,648 1112,622 1111,737 1042,762" fill="#d0d0d0"/>
<polygon points="486,489 756,670 755,749 483,567" fill="#bc6464"/>
<polygon points="756,670 1114,543 1113,620 755,749" fill="#cd6c6c"/>
<polygon points="487,447 757,605 756,670 486,489" fill="#6188b4"/>
<polygon points="757,600 1115,472 1114,543 756,670" fill="#6f9bcc"/>
<polygon points="459,397 728,578 728,608 459,428" fill="#c6c6c6"/>
<polygon points="728,578 1145,430 1143,462 728,608" fill="#c2c2c2"/>
<polygon points="459,397 876,246 1145,430 728,578" fill="#fff"/>
</g>
<ellipse cx="935" cy="570" rx="9.500" ry="11" fill="url(#hb)" stroke="#000" stroke-width="1.500" transform="rotate(20 935 570)"/>
<ellipse cx="934" cy="647" rx="9" ry="11" fill="url(#hr)" stroke="#000" stroke-width="1.500" transform="rotate(20 934 647)"/>
<g stroke="#000" stroke-width="1.500">
<ellipse cx="802" cy="407" rx="75" ry="41" fill="#0f6e56"/>
<ellipse cx="802" cy="401" rx="75" ry="39" fill="#10b88c"/>
<ellipse cx="802" cy="399" rx="54" ry="25" fill="#0e7a60"/>
<ellipse cx="802" cy="408" rx="48" ry="15" fill="#fff"/>
<ellipse cx="854" cy="379" rx="7" ry="4" fill="#111"/><ellipse cx="749" cy="417" rx="7" ry="4" fill="#444"/>
</g>
<ellipse cx="802" cy="422" rx="18" ry="2.500" fill="#68c040"/>
<g>
<ellipse cx="883" cy="318" rx="17" ry="9.500" fill="#000"/><ellipse cx="883" cy="318" rx="13" ry="7" fill="#10d020"/><rect x="875" y="314" width="14" height="8" rx="2" fill="#0a9a18" stroke="#000"/>
<ellipse cx="1007" cy="402" rx="17" ry="9.500" fill="#000"/><ellipse cx="1007" cy="402" rx="13" ry="7" fill="#10d020"/><rect x="999" y="398" width="14" height="8" rx="2" fill="#0a9a18" stroke="#000"/>
<ellipse cx="596" cy="421" rx="17" ry="9.500" fill="#000"/><ellipse cx="596" cy="421" rx="13" ry="7" fill="#10d020"/><rect x="588" y="417" width="14" height="8" rx="2" fill="#0a9a18" stroke="#000"/>
<ellipse cx="721" cy="506" rx="17" ry="9.500" fill="#000"/><ellipse cx="721" cy="506" rx="13" ry="7" fill="#10d020"/><rect x="713" y="502" width="14" height="8" rx="2" fill="#0a9a18" stroke="#000"/>
</g>
<path d="M800 468l3 24-3 20-3-20z" fill="#6e88c8"/><path d="M766 493l18 9 13 11-18-8z" fill="#a8d0b0"/><path d="M843 500l-19 10-20 5 17-9z" fill="#e8a8b0"/>
<text x="782" y="464" style="fill:#3058c8">ZC</text><text x="767" y="489" style="fill:#3a9050">YC</text><text x="829" y="495" style="fill:#c04058">XC</text>
<g fill="none" stroke="#f0a24e" stroke-width="2.500">
<path d="M825 395L622 467 775 570 978 497zM825 427L622 498 775 603 978 530zM825 395V427M622 467V498M775 570V603M978 497V530"/>
</g>
<g fill="none" stroke="#f0a24e" stroke-width="6.500">
<ellipse cx="809" cy="477" rx="27.500" ry="13.500"/><ellipse cx="725" cy="508" rx="27.500" ry="13.500"/><ellipse cx="873" cy="521" rx="27.500" ry="13.500"/><ellipse cx="788" cy="551" rx="27.500" ry="13.500"/>
</g>
<path d="M379 867l16-8 18 7v19l-18 10-16-8z" fill="#a4a4a4"/><path d="M379 867l16 8 18-9M395 875v20" stroke="#bcbcbc" fill="none"/>
<path d="M394 895l-24-16" stroke="#3c9c48" stroke-width="2.400"/><path d="M394 895l28-11" stroke="#d04848" stroke-width="2.400"/><path d="M394.500 895V861" stroke="#1838c8" stroke-width="3"/><path d="M391 863l3.500-6 3.500 6z" fill="#1838c8"/>
<circle cx="394" cy="895" r="4.500" fill="url(#ball)"/>
<text x="391" y="858" style="fill:#1838c8;font-size:11px">Z</text><text x="363" y="881" style="fill:#3c9c48;font-size:11px">Y</text><text x="426" y="887" style="fill:#b03838;font-size:11px">X</text>
<rect x="1071" y="914" width="38" height="38" fill="#cdd6e4" stroke="#3c8ce8" stroke-width="2"/><path d="M1085 945c-5-4-3-10 0-12 0-8 3-13 6-13s6 6 6 13c4 3 4 9 0 12z" fill="#dde4ec" stroke="#aab"/>
<rect x="1110.500" y="929.500" width="126" height="22" fill="#fff" stroke="#3c8ce8" stroke-width="1.500"/>
<text x="1114" y="945" style="fill:#2080e8;font-weight:700">中</text>
<path d="M1143 933c3 6 1 12-7 12 5 2 11-1 11-6 0-3-2-5-4-6z" fill="#2080e8"/><path d="M1136 939l3 5" stroke="#2080e8"/>
<circle cx="1160" cy="941" r="1.500" fill="#2080e8"/><path d="M1165 939v3l-1 2" stroke="#2080e8" stroke-width="1.500" fill="none"/>
<path d="M1188 934a4 4 0 0 0-5 5l-6 6 2 2 6-6a4 4 0 0 0 5-5l-3 2-2-1z" fill="#2080e8"/>
<path d="M1200 937h9v10h-9zM1203 934h3v3h-3z" fill="#2080e8"/><path d="M1202 940h5M1202 943h5" stroke="#fff"/>
<circle cx="1225" cy="940" r="7" fill="#fff" stroke="#2080e8" stroke-width="1.600"/><circle cx="1222.500" cy="938" r="1" fill="#2080e8"/><circle cx="1227.500" cy="938" r="1" fill="#2080e8"/><path d="M1221 942c2 2.500 6 2.500 8 0" fill="none" stroke="#2080e8"/>

<rect x="4" y="957" width="1481" height="69" fill="#dbdbdb"/>
<rect x="335" y="957" width="1150" height="1" fill="#f8f8f8"/>
<rect x="4" y="956" width="331" height="1" fill="#aaa"/>
<path d="M5 990.500h181M186.500 958v33M138.500 960v30M155.500 992v32M882.500 992v33M155 991.500h727" stroke="#f4f4f4" fill="none"/>
<use href="#grip" x="9" y="964"/>
<rect x="16" y="964" width="21" height="20" fill="#a8a8a8"/><path d="M22 979c0-6 4-9 7-9l3 8-3 2z" fill="#b8b090"/>
<g transform="translate(54 974) scale(.85)"><use href="#cb" x="-3" y="-7"/><use href="#cb" x="1" y="6"/></g><path d="M60 966h9M64.500 962v9" stroke="#0878e8" stroke-width="2"/>
<g transform="translate(90 973) scale(.9)"><use href="#cb" y="-1"/></g><path d="M80 983l-3 3 7 1M100 964l-6-2 6-2" fill="none" stroke="#3060d0" stroke-width="1.600"/>
<use href="#mirr" x="120" y="974"/>
<g transform="translate(153 974) scale(.7)"><use href="#cb" x="-2" y="-10"/><use href="#cb" x="-8" y="6"/><use href="#cb" x="10" y="6"/></g><use href="#tk" x="178.500" y="982"/>
<use href="#grip" x="160" y="997"/>
<path d="M167 999l11 2 2 16-13 1zM167 1006h12M173 1000v17" fill="#f4f4f4" stroke="#333"/><path d="M182 1000l-3 3 3-1 1 4 1-4 4 1-3-3 3-3-4 1-1-3-1 3-4-1z" fill="#f8e830"/>
<rect x="196" y="996" width="24" height="24" fill="#7e8c90"/>
<text x="223" y="1012" style="fill:#a4a4a4">完成草图</text>
<g fill="none" stroke="#111" stroke-width="1.300">
<path d="M282 998v13c0 8 9 6 9-1s9-7 9 1"/><path d="M314 1016l16-16"/><path d="M343 999c8 0 16 6 19 16"/><circle cx="384" cy="1008" r="10"/>
<path d="M406 999h12c6 2 7 8 7 18" stroke="#b08888"/><path d="M436 999h12l8 10v8" stroke="#b08888"/>
<rect x="467" y="1002" width="19" height="13"/>
<path d="M501 1007l5 8 5-8 6 6"/><path d="M540 1000v16M532 1008h16" stroke-width="1.400"/>
</g>
<g fill="#d01010"><circle cx="282" cy="1009" r="2"/><circle cx="291" cy="1009" r="2"/><circle cx="300" cy="1009" r="2"/><circle cx="314" cy="1016" r="2"/><circle cx="330" cy="1000" r="2"/><circle cx="344" cy="999" r="2"/><circle cx="357" cy="1003" r="2"/><circle cx="362" cy="1015" r="2"/><circle cx="468" cy="1001" r="2"/><circle cx="486" cy="1015" r="2"/><circle cx="506" cy="1015" r="1.800"/></g>
<path d="M561 1003c4-5 9-4 11-1 3-2 10-2 11 2v10l-7 6h-15z" fill="none" stroke="#aaa" stroke-width="1.500"/><use href="#tk" x="592.500" y="1008"/>
<g stroke="#f4f4f4"><path d="M601.500 993v31M669.500 993v31M717.500 993v31"/></g>
<g fill="none" stroke="#9c9c9c">
<path d="M610 1000l12 20M638 1020l10-20"/><path d="M620 1004l8 3-3 7-6-3zM652 1000l-6 12 4 2 6-12z" fill="#a8a890"/>
<path d="M677 1001v18M697 1001v18M677 1010h20"/><path d="M684 1006l6-10 3 2-5 10z" fill="#a8a890"/>
<path d="M728 1005l7-7M733 1007l7-7M735 1016h11M740 1006v10"/><path d="M758 1020l6-15h14"/><circle cx="764" cy="1005" r="2" fill="#8c8c8c"/>
<circle cx="811" cy="1011" r="7"/><path d="M804 1000l14 18M817 999l-8 12"/><path d="M832 1005l6 4-6 4z" fill="#9c9c9c"/><path d="M843 1005l7-8M848 1007l7-8M842 1019h14M849 1009v10"/>
</g>
<use href="#tk" x="709.500" y="1008"/><use href="#tk" x="789.500" y="1008"/><use href="#tk" x="863.500" y="1008"/><use href="#tk" x="875.500" y="1016"/>
<rect x="4" y="1026" width="1481" height="1" fill="#6a6a6a"/>
<rect x="0" y="30" width="4" height="1003" fill="#111"/><rect x="1485" y="30" width="4" height="1003" fill="#1c1c1c"/>
<rect x="0" y="1027" width="1489" height="6" fill="#222"/>

<g transform="translate(23 270)"><g transform="translate(-6 -7) scale(.6)"><use href="#cb"/></g><g transform="translate(6 6) scale(.55)"><use href="#cb"/></g><path d="M-3 2v11M-3 8h4M3 0h9" fill="none" stroke="#222"/></g>
<use href="#mirr" transform="translate(23 313)"/>
<g transform="translate(24 355)"><rect x="-9" y="-13" width="9" height="9" rx="2" fill="#d878b0" stroke="#804"/><path d="M-5-4V9h6M2-2h9" fill="none" stroke="#222"/><circle cx="6" cy="8" r="5" fill="none" stroke="#a03070"/><circle cx="6" cy="8" r="2" fill="#a03070"/></g>
<g transform="translate(24 397)"><rect x="-11" y="-8" width="7" height="19" fill="#f08020"/><rect x="-4" y="-10" width="7" height="21" fill="#30b830"/><rect x="3" y="-12" width="7" height="21" fill="#2090e0"/></g>
<g transform="translate(22 454)"><circle cx="0" cy="2" r="9" fill="#1878e0" stroke="#045"/><rect x="-1.500" y="-2" width="3" height="8" fill="#fff"/><circle cx="0" cy="-4" r="1.500" fill="#fff"/><path d="M0-12c8 0 13 5 14 13M2-17c9 0 17 7 18 17" fill="none" stroke="#3068c0" stroke-width="2"/></g>
<g transform="translate(24 506)"><path d="M-9-12h12l6 6v18H-9z" fill="#f4f8ff" stroke="#4870c0"/><circle cy="3" r="6" fill="#1e8c6c"/><circle cx="-1" cy="2" r="2.500" fill="#c0d0f0"/></g>
<g transform="translate(24 559)"><circle r="10" fill="#e8e8f8" stroke="#667" stroke-width="1.600"/><path d="M0-7V0h6" fill="none" stroke="#111" stroke-width="1.800"/></g>
<g transform="translate(24 600)"><path d="M-10-8l6-3v20l-6 2z" fill="#eee" stroke="#778"/><rect x="-3" y="-10" width="15" height="20" fill="#fff" stroke="#aaa"/><circle cx="0" cy="-5" r="2" fill="#2060d0"/><circle cx="0" cy="0" r="2" fill="#10a030"/><circle cx="0" cy="5" r="2" fill="#d02020"/><path d="M4-5h6M4 0h6M4 5h6" stroke="#333"/></g>
<g transform="translate(24 644)"><rect x="-10" y="-11" width="7" height="21" fill="#18c040"/><rect x="-10" y="-11" width="7" height="6" fill="#e82020"/><rect x="-10" y="-4" width="7" height="5" fill="#f0e020"/><rect x="-10" y="5" width="7" height="6" fill="#2020e0"/><path d="M0-8L9 9" stroke="#111" stroke-width="2.400"/></g>
<g transform="translate(24 685)"><path d="M-8-12l2 3v18l4 2-10 0z" fill="#3070d0"/><path d="M-8 0h6M2-6l10-4M2-6l9 15" fill="none" stroke="#111" stroke-width="1.800"/></g>
<g transform="translate(24 729)"><circle cx="5" cy="-6" r="5" fill="#e0b060"/><path d="M-1 7c0-6 3-8 6-8s8 2 8 8z" fill="#38a040"/><circle cx="-5" cy="0" r="5" fill="#e0a890"/><path d="M-12 12c0-6 3-8 7-8s7 2 7 8z" fill="#8048b0"/></g>
<g transform="translate(24 769)"><path d="M-10-8l6-3v20l-6 2z" fill="#eee" stroke="#778"/><rect x="-3" y="-10" width="15" height="20" fill="#fff" stroke="#aaa"/><rect x="0" y="-7" width="10" height="12" fill="#d83030"/><path d="M2-5l3 4 3-4z" fill="#f8e030"/></g>
</svg>
</body></html>
